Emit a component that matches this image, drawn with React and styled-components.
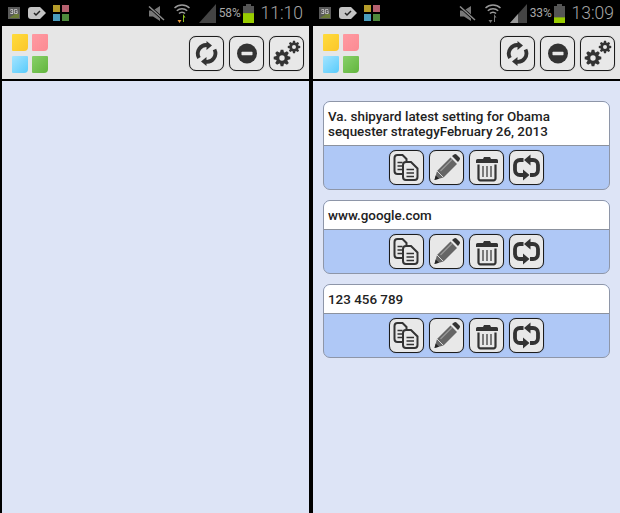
import React from 'react'
import styled, { createGlobalStyle } from 'styled-components'

const GlobalStyle = createGlobalStyle`
    html, body {
        margin: 0;
        height: 100%;
        background: #000;
        overflow: hidden;
    }
    #root {
        height: 100%;
    }
`

const Screens = styled.div`
    display: flex;
    height: 513px;
    width: 620px;
    padding-left: 2px;
    gap: 4px;
    box-sizing: border-box;
    font-family: Roboto, "Liberation Sans", sans-serif;
`

const Phone = styled.div`
    width: 307px;
    display: flex;
    flex-direction: column;
`

const StatusBar = styled.div`
    height: 26px;
    flex: none;
    display: flex;
    align-items: center;
    justify-content: space-between;
    padding: 0 6px 0 6px;
    background: #000;

    svg {
        display: block;
        filter: blur(0.3px);
    }
`

const StatusGroup = styled.div`
    display: flex;
    align-items: center;
    gap: ${p => p.$gap}px;
`

const BatteryStatus = styled.div`
    display: flex;
    align-items: center;
    gap: 3px;
`

const Percent = styled.span`
    font-size: 12px;
    color: #a8a8a8;
    letter-spacing: -0.2px;
`

const Clock = styled.span`
    font-size: 17.5px;
    font-weight: 300;
    color: #a6a6a6;
    margin-left: -3px;
`

const Header = styled.header`
    height: 45px;
    flex: none;
    display: flex;
    align-items: flex-start;
    justify-content: space-between;
    padding: 8px 5px 0 10px;
    background: #e6e6e6;
    border-bottom: 2px solid #000;
`

const Logo = styled.div`
    display: grid;
    grid-template-columns: 16px 16px;
    grid-template-rows: 17px 17px;
    column-gap: 4px;
    row-gap: 5px;
`

const Note = styled.div`
    background: ${p => p.$color};
    border-radius: 1px 1px 4px 1px;
    filter: blur(0.4px);
`

const Tools = styled.div`
    display: flex;
    gap: 5px;
    padding-top: 2px;
`

const IconButton = styled.button`
    width: 35px;
    height: 35px;
    padding: 0;
    display: block;
    box-sizing: border-box;
    background: #e8e8e8;
    border: 1px solid #1c1c1c;
    border-radius: 7px;
    box-shadow: 0 0 1px rgba(0, 0, 0, 0.45);

    svg {
        display: block;
        margin: -1px;
        width: 35px;
        height: 35px;
        filter: blur(0.3px);
    }
`

const Content = styled.main`
    flex: 1;
    display: flex;
    flex-direction: column;
    gap: 10px;
    padding: 20px 10px 0;
    background: #dde4f6;
`

const Card = styled.article`
    border: 1px solid #8e96a8;
    border-radius: 7px;
    overflow: hidden;
    background: #afc8f6;
`

const CardText = styled.div`
    padding: 7px 4px 6px;
    background: #fff;
    border-bottom: 1px solid #8c929e;
    font-size: 13.4px;
    font-weight: 500;
    line-height: 15px;
    color: #222;
`

const CardActions = styled.div`
    display: flex;
    justify-content: center;
    gap: 5.3px;
    padding: 4px 0;
`

const INK = '#333'

// toothed outline with a hole in the middle
const gearPath = (cx, cy, outer, inner, hole, teeth) => {
    const pts = []
    const step = (Math.PI * 2) / teeth
    for (let i = 0; i < teeth; i++) {
        const a = i * step
        const w = step * 0.2
        const at = (r, t) => `${(cx + r * Math.cos(t)).toFixed(2)} ${(cy + r * Math.sin(t)).toFixed(2)}`
        pts.push(at(inner, a - step / 2 + w * 0.4), at(outer, a - w), at(outer, a + w), at(inner, a + step / 2 - w * 0.4))
    }
    const ring = `M${cx - hole} ${cy}a${hole} ${hole} 0 1 0 ${hole * 2} 0a${hole} ${hole} 0 1 0 ${-hole * 2} 0Z`
    return `M${pts.join('L')}Z${ring}`
}

const SyncIcon = () => (
    <svg viewBox="0 0 35 35">
        <path d="M10 22A8.600 8.600 0 0 1 19 9.200M25.500 13.500A8.600 8.600 0 0 1 16.500 25.800" fill="none" stroke={INK} strokeWidth="3.800" />
        <path d="M17.500 5l5.500 4.500-5.500 4.500zM17.500 21l-5.500 4.500 5.500 4.500z" fill={INK} />
    </svg>
)

const MinusIcon = () => (
    <svg viewBox="0 0 35 35">
        <circle cx="18" cy="17.500" r="10" fill={INK} />
        <rect x="12.500" y="15.800" width="11" height="3.400" rx="0.600" fill="#e8e8e8" />
    </svg>
)

const GearsIcon = () => (
    <svg viewBox="0 0 35 35">
        <path fillRule="evenodd" d={gearPath(13, 22, 8.400, 6, 2.700, 8)} fill={INK} />
        <path fillRule="evenodd" d={gearPath(25, 11, 6.300, 4.500, 2, 8)} fill={INK} />
    </svg>
)

const CopyIcon = () => (
    <svg viewBox="0 0 35 35">
        <path d="M14 24H8.500a3 3 0 0 1-3-3V8a3 3 0 0 1 3-3h5l4 4v2" fill="none" stroke={INK} strokeWidth="2" />
        <path d="M8.500 12.500h5M8.500 16h5M8.500 19.500h5" stroke={INK} strokeWidth="1.600" />
        <path d="M17 12h5l6.500 6.500V27a3 3 0 0 1-3 3H17a3 3 0 0 1-3-3V15a3 3 0 0 1 3-3z" fill="#e8e8e8" stroke={INK} strokeWidth="2" />
        <path d="M17.500 19.500h7.500M17.500 23h7.500M17.500 26.500h7.500" stroke={INK} strokeWidth="1.600" />
    </svg>
)

const PencilIcon = () => (
    <svg viewBox="0 0 35 35">
        <path d="M5.500 30l2.500-9L21.500 7.500l6.500 6.500L14.500 27.500z" fill="#666" />
        <path d="M5.500 30l1.200-4.500 3.300 3.300z" fill="#222" />
        <path d="M8 21l6.500 6.500" stroke="#d8d8d8" strokeWidth="1" />
        <path d="M11.500 21L23 9.500" stroke="#999" strokeWidth="1.200" />
        <path d="M23 6l2-1.500a2 2 0 0 1 2.500 0l3 3a2 2 0 0 1 0 2.500L29 12z" fill={INK} />
    </svg>
)

const TrashIcon = () => (
    <svg viewBox="0 0 35 35">
        <path d="M7 10.500a1.500 1.500 0 0 1 1.500-1.500H14l1-2h6l1 2h5.500a1.500 1.500 0 0 1 1.500 1.500V13H7z" fill={INK} />
        <path d="M9.500 14.500V28.500a1.800 1.800 0 0 0 1.800 1.800h13.400a1.800 1.800 0 0 0 1.800-1.800V14.500" fill="none" stroke={INK} strokeWidth="2.200" />
        <path d="M14 16v11M18 16v11M22 16v11" stroke="#555" strokeWidth="1.500" />
    </svg>
)

const SwapIcon = () => (
    <svg viewBox="0 0 35 35">
        <path d="M14.500 10H11a5 5 0 0 0-5 5v5a5 5 0 0 0 5 5h4" fill="none" stroke={INK} strokeWidth="3.800" />
        <path d="M20 10h4a5 5 0 0 1 5 5v5a5 5 0 0 1-5 5h-3" fill="none" stroke={INK} strokeWidth="3.800" />
        <path d="M21.500 4.500L15 10l6.500 5.500zM14 19.500L20.500 25 14 30.500z" fill={INK} />
    </svg>
)

const NetworkIcon = () => (
    <svg width="12" height="12" viewBox="0 0 12 12">
        <rect width="12" height="12" fill="#5a5a5a" />
        <path d="M1 11l6-4h4v4z" fill="#6b7c38" />
        <text x="6" y="6.500" fontSize="6.500" fontFamily="Roboto" fill="#e8e8e8" textAnchor="middle">3G</text>
    </svg>
)

const TagIcon = () => (
    <svg width="18" height="12" viewBox="0 0 18 12">
        <path d="M0 3a3 3 0 0 1 3-3h9l6 6-6 6H3a3 3 0 0 1-3-3z" fill="#c4c4c4" />
        <path d="M6 6l2 2 4-4" fill="none" stroke="#222" strokeWidth="1.500" />
    </svg>
)

const AppsIcon = () => (
    <svg width="16" height="16" viewBox="0 0 16 16">
        <rect width="7" height="7" fill="#b59c2a" />
        <rect x="9" width="7" height="7" fill="#b5606e" />
        <rect y="9" width="7" height="7" fill="#4a9dbd" />
        <rect x="9" y="9" width="7" height="7" fill="#4f8a3c" />
    </svg>
)

const MuteIcon = () => (
    <svg width="17" height="15" viewBox="0 0 17 15">
        <path d="M1 4.500h4L12 0v15L5 10.500H1z" fill="#777" />
        <path d="M1 0.500L16 14" stroke="#000" strokeWidth="3" />
        <path d="M1 0.500L16 14" stroke="#8a8a8a" strokeWidth="1.500" />
    </svg>
)

const WifiIcon = ({ active }) => (
    <svg width="16" height="20" viewBox="0 0 16 20">
        <path d="M0.500 5a11 11 0 0 1 15 0M2.800 7.800a7.500 7.500 0 0 1 10.400 0M5 10.500a4 4 0 0 1 6 0" fill="none" stroke="#9a9a9a" strokeWidth="1.500" />
        <path d="M6 12v5H3.500L5.500 20l2-3H6" fill={active ? '#e89a3c' : '#777'} />
        <path d="M9 11l2.500 3.500H10V19H9z" fill={active ? '#8fc31f' : '#777'} />
    </svg>
)

const SignalIcon = ({ level }) => (
    <svg width="17" height="19" viewBox="0 0 17 19">
        <path d="M0 19L17 0v19z" fill="#444" />
        {level && <path d={`M0 19L${level} ${19 - (level * 19) / 17}V19z`} fill="#999" />}
    </svg>
)

const BatteryIcon = ({ percent }) => (
    <svg width="11" height="19" viewBox="0 0 11 19">
        <rect x="3" width="5" height="2" fill="#555" />
        <rect y="2" width="11" height="17" fill="#555" />
        <rect y={19 - (17 * percent) / 100} width="11" height={(17 * percent) / 100} fill="#99cc00" />
    </svg>
)

const notes = [
    'linear-gradient(135deg, #ffdc3c, #fbc62a)',
    'linear-gradient(135deg, #ff9aa2, #fb8a92)',
    'linear-gradient(135deg, #a4e4ff, #58cbfb)',
    'linear-gradient(135deg, #88d068, #62b53e)',
]

const clips = [
    'Va. shipyard latest setting for Obama sequester strategyFebruary 26, 2013',
    'www.google.com',
    '123 456 789',
]

function Screen({ time, battery, signal, wifiActive, items }) {
    return (
        <Phone>
            <StatusBar>
                <StatusGroup $gap={7.5}>
                    <NetworkIcon />
                    <TagIcon />
                    <AppsIcon />
                </StatusGroup>
                <StatusGroup $gap={9}>
                    <MuteIcon />
                    <WifiIcon active={wifiActive} />
                    <BatteryStatus>
                        <SignalIcon level={signal} />
                        <Percent>{battery}%</Percent>
                        <BatteryIcon percent={battery} />
                    </BatteryStatus>
                    <Clock>{time}</Clock>
                </StatusGroup>
            </StatusBar>
            <Header>
                <Logo>
                    {notes.map(color => <Note key={color} $color={color} />)}
                </Logo>
                <Tools>
                    <IconButton><SyncIcon /></IconButton>
                    <IconButton><MinusIcon /></IconButton>
                    <IconButton><GearsIcon /></IconButton>
                </Tools>
            </Header>
            <Content>
                {items.map(text => (
                    <Card key={text}>
                        <CardText>{text}</CardText>
                        <CardActions>
                            <IconButton><CopyIcon /></IconButton>
                            <IconButton><PencilIcon /></IconButton>
                            <IconButton><TrashIcon /></IconButton>
                            <IconButton><SwapIcon /></IconButton>
                        </CardActions>
                    </Card>
                ))}
            </Content>
        </Phone>
    )
}

export default function App() {
    return (
        <>
            <GlobalStyle />
            <Screens>
                <Screen time="11:10" battery={58} wifiActive items={[]} />
                <Screen time="13:09" battery={33} signal={8} items={clips} />
            </Screens>
        </>
    )
}
